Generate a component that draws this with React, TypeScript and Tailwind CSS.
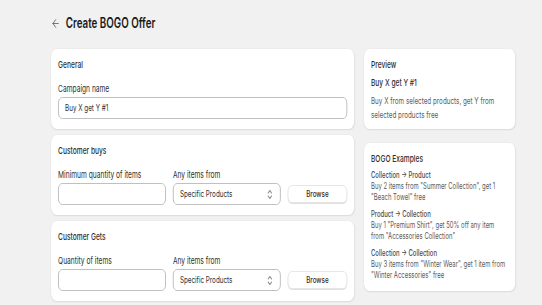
import { ArrowLeft } from "lucide-react"

function Card({ children, className = "" }: { children: React.ReactNode; className?: string }) {
  return (
    <div className={`rounded-lg bg-white shadow-[0_1px_2px_rgba(0,0,0,0.08),0_0_0_1px_rgba(0,0,0,0.02)] ${className}`}>
      {children}
    </div>
  )
}

function SelectIcon() {
  return (
    <svg width="9" height="11" viewBox="0 0 9 11" fill="none" stroke="#8a8a8a" strokeWidth="1.1" strokeLinecap="round" strokeLinejoin="round">
      <path d="M2 4 L4.5 1.5 L7 4" />
      <path d="M2 7 L4.5 9.5 L7 7" />
    </svg>
  )
}

function ProductRow({ label }: { label: string }) {
  return (
    <div className="mt-[12px] grid grid-cols-[154px_154px_1fr] gap-x-[10px]">
      <div className="text-[9.5px] leading-[12px] text-[#303030]">{label}</div>
      <div className="text-[9.5px] leading-[12px] text-[#303030]">Any items from</div>
      <div />
      <div className="mt-[2px] h-[22px] rounded-md border border-[#b5b5b5] bg-white" />
      <div className="mt-[2px] flex h-[22px] items-center justify-between rounded-md border border-[#b5b5b5] bg-white pl-[9px] pr-[10px]">
        <span className="text-[9px] text-[#303030]">Specific Products</span>
        <SelectIcon />
      </div>
      <div className="mt-[2px] flex items-center">
        <button className="h-[18px] w-full rounded-md border border-[#e3e3e3] bg-white text-[9px] font-medium text-[#303030] shadow-[0_1px_0_rgba(0,0,0,0.12)]">
          Browse
        </button>
      </div>
    </div>
  )
}

const examples = [
  { title: "Collection → Product", body: "Buy 2 items from \"Summer Collection\", get 1 \"Beach Towel\" free" },
  { title: "Product → Collection", body: "Buy 1 \"Premium Shirt\", get 50% off any item from \"Accessories Collection\"" },
  { title: "Collection → Collection", body: "Buy 3 items from \"Winter Wear\", get 1 item from \"Winter Accessories\" free" },
]

export default function App() {
  return (
    <div className="h-screen w-full overflow-hidden bg-[#f1f1f1]">
      <div className="w-[774px] origin-top-left scale-x-[0.7] pl-[73px] pt-[13px] font-['Inter',sans-serif] text-[#303030]">
        <div className="flex h-[20px] items-center gap-[8px]">
          <ArrowLeft size={13} strokeWidth={1.6} className="text-[#4a4a4a]" />
          <h1 className="text-[14px] font-semibold leading-[20px] text-[#1a1a1a]">Create BOGO Offer</h1>
        </div>

        <div className="mt-[16px] flex gap-[14px]">
          <div className="flex w-[433px] flex-col gap-[6px]">
            <Card className="px-[10px] pb-[10px] pt-[10px]">
              <div className="text-[9.5px] font-medium leading-[12px]">General</div>
              <div className="mt-[12px] text-[9.5px] leading-[12px]">Campaign name</div>
              <div className="mt-[2px] flex h-[22px] items-center rounded-md border border-[#b5b5b5] px-[9px] text-[9px]">
                Buy X get Y #1
              </div>
            </Card>

            <Card className="px-[10px] pb-[10px] pt-[10px]">
              <div className="text-[9.5px] font-medium leading-[12px]">Customer buys</div>
              <ProductRow label="Minimum quantity of items" />
            </Card>

            <Card className="px-[10px] pb-[10px] pt-[10px]">
              <div className="text-[9.5px] font-medium leading-[12px]">Customer Gets</div>
              <ProductRow label="Quantity of items" />
            </Card>
          </div>

          <div className="flex w-[216px] flex-col gap-[14px]">
            <Card className="px-[10px] pb-[7px] pt-[10px]">
              <div className="text-[9.5px] font-medium leading-[12px]">Preview</div>
              <div className="mt-[6px] text-[9.5px] font-medium leading-[12px]">Buy X get Y #1</div>
              <p className="mt-[5px] text-[9px] leading-[14px] text-[#5c5c5c]">
                Buy X from selected products, get Y from selected products free
              </p>
            </Card>

            <Card className="px-[10px] pb-[10px] pt-[10px]">
              <div className="text-[9.5px] font-medium leading-[12px]">BOGO Examples</div>
              <div className="mt-[5px] flex flex-col gap-[6px]">
                {examples.map((ex) => (
                  <div key={ex.title}>
                    <div className="text-[8.5px] font-medium leading-[11px] text-[#4a4a4a]">{ex.title}</div>
                    <div className="text-[8.5px] leading-[11px] text-[#5c5c5c]">{ex.body}</div>
                  </div>
                ))}
              </div>
            </Card>
          </div>
        </div>
      </div>
    </div>
  )
}
